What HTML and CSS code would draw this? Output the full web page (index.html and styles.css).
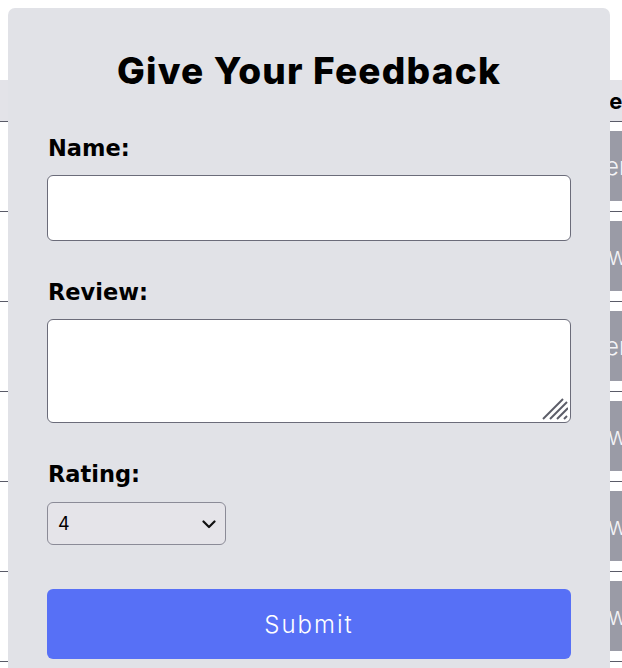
FILE: index.html
```html
<!DOCTYPE html>
<html lang="en">
<head>
<meta charset="utf-8">
<title>Give Your Feedback</title>
<link rel="stylesheet" href="styles.css">
</head>
<body>
  <div class="table">
    <div class="row head">
      <div class="cell-spacer"></div>
      <div class="head-cell">State</div>
    </div>
    <div class="row"><div class="cell-spacer"></div><div class="tag">Seen</div></div>
    <div class="row"><div class="cell-spacer"></div><div class="tag">New</div></div>
    <div class="row"><div class="cell-spacer"></div><div class="tag">Seen</div></div>
    <div class="row"><div class="cell-spacer"></div><div class="tag">New</div></div>
    <div class="row"><div class="cell-spacer"></div><div class="tag">New</div></div>
    <div class="row"><div class="cell-spacer"></div><div class="tag">New</div></div>
  </div>

  <div class="modal">
    <h2 class="title">Give Your Feedback</h2>
    <form class="form">
      <label class="label" for="name">Name:</label>
      <input class="input" id="name" type="text">
      <label class="label gap" for="review">Review:</label>
      <div class="textarea-wrap">
        <textarea class="textarea" id="review"></textarea>
        <svg class="grip" width="26" height="22" viewBox="0 0 26 22" aria-hidden="true">
          <g stroke="#5c5d68" stroke-width="2" stroke-linecap="butt">
            <line x1="1" y1="21" x2="21" y2="1"/>
            <line x1="8" y1="21" x2="25" y2="4"/>
            <line x1="15" y1="21" x2="26" y2="10"/>
            <line x1="22" y1="21" x2="25" y2="18"/>
          </g>
        </svg>
      </div>
      <label class="label gap" for="rating">Rating:</label>
      <div class="select-wrap">
        <select class="select" id="rating">
          <option>1</option>
          <option>2</option>
          <option>3</option>
          <option selected>4</option>
          <option>5</option>
        </select>
        <svg class="chevron" width="14" height="9" viewBox="0 0 14 9" aria-hidden="true">
          <path d="M1.5 1.5 L7 7 L12.5 1.5" fill="none" stroke="#111" stroke-width="2.2" stroke-linecap="round" stroke-linejoin="round"/>
        </svg>
      </div>
      <button class="submit" type="button">Submit</button>
    </form>
  </div>
</body>
</html>
```

FILE: styles.css
```css
html, body {
  margin: 0;
  padding: 0;
  background: #ffffff;
  overflow: hidden;
  width: 622px;
  height: 668px;
  font-family: "Inter", "Liberation Sans", sans-serif;
}

.table {
  margin-top: 80px;
  width: 700px;
  display: flex;
  flex-direction: column;
}

.row {
  display: flex;
  height: 80px;
  padding: 9px 0 0 0;
  border-bottom: 1px solid #5a5b68;
}

.row.head {
  height: 41px;
  padding: 0;
  background: #e3e3e8;
  align-items: center;
}

.cell-spacer {
  width: 560px;
  flex: none;
}

.head-cell {
  padding-left: 6px;
  font-weight: 700;
  font-size: 22px;
  color: #000;
}

.tag {
  width: 100px;
  height: 70px;
  background: #9a9ba6;
  color: #f4f4f6;
  font-size: 24px;
  font-weight: 300;
  display: flex;
  align-items: center;
  padding-left: 16px;
  box-sizing: border-box;
}

.modal {
  position: absolute;
  top: 8px;
  left: 8px;
  width: 602px;
  height: 700px;
  box-sizing: border-box;
  background: #e1e2e7;
  border-radius: 7px;
  padding: 41px 39px 0 39px;
}

.title {
  margin: 0;
  text-align: center;
  font-size: 37px;
  line-height: 44px;
  font-weight: 800;
  color: #000;
  letter-spacing: 1.2px;
}

.form {
  display: flex;
  flex-direction: column;
  margin-top: 42px;
}

.label {
  font-family: "DejaVu Sans", "Inter", sans-serif;
  font-size: 22.5px;
  line-height: 26px;
  font-weight: 700;
  color: #000;
  padding-left: 1px;
  margin-bottom: 14px;
}

.label.gap {
  margin-top: 38px;
}

.input {
  box-sizing: border-box;
  width: 524px;
  height: 66px;
  border: 1px solid #6b6c7a;
  border-radius: 6px;
  background: #fff;
  padding: 0 12px;
  font-size: 18px;
  font-family: inherit;
  margin: 0;
}

.textarea-wrap {
  position: relative;
  width: 524px;
  height: 104px;
}

.textarea {
  display: block;
  box-sizing: border-box;
  width: 524px;
  height: 104px;
  border: 1px solid #6b6c7a;
  border-radius: 6px;
  background: #fff;
  padding: 8px 12px;
  font-size: 18px;
  font-family: inherit;
  margin: 0;
  resize: none;
}

.grip {
  position: absolute;
  right: 3px;
  bottom: 3px;
  pointer-events: none;
}

.select-wrap {
  position: relative;
  width: 179px;
  height: 43px;
  margin-top: 1px;
}

.select {
  display: block;
  box-sizing: border-box;
  width: 179px;
  height: 43px;
  margin: 0;
  border: 1px solid #8b8b97;
  border-radius: 6px;
  background-color: #e5e4e9;
  padding: 0 10px;
  font-size: 18px;
  font-family: inherit;
  color: #000;
  appearance: none;
  -webkit-appearance: none;
}

.chevron {
  position: absolute;
  right: 10px;
  top: 18px;
  pointer-events: none;
}

.submit {
  margin-top: 44px;
  width: 524px;
  height: 70px;
  border: none;
  border-radius: 6px;
  background: #5770f6;
  color: #fff;
  font-family: inherit;
  font-size: 24px;
  font-weight: 300;
  letter-spacing: 2px;
  padding: 0;
}
```
